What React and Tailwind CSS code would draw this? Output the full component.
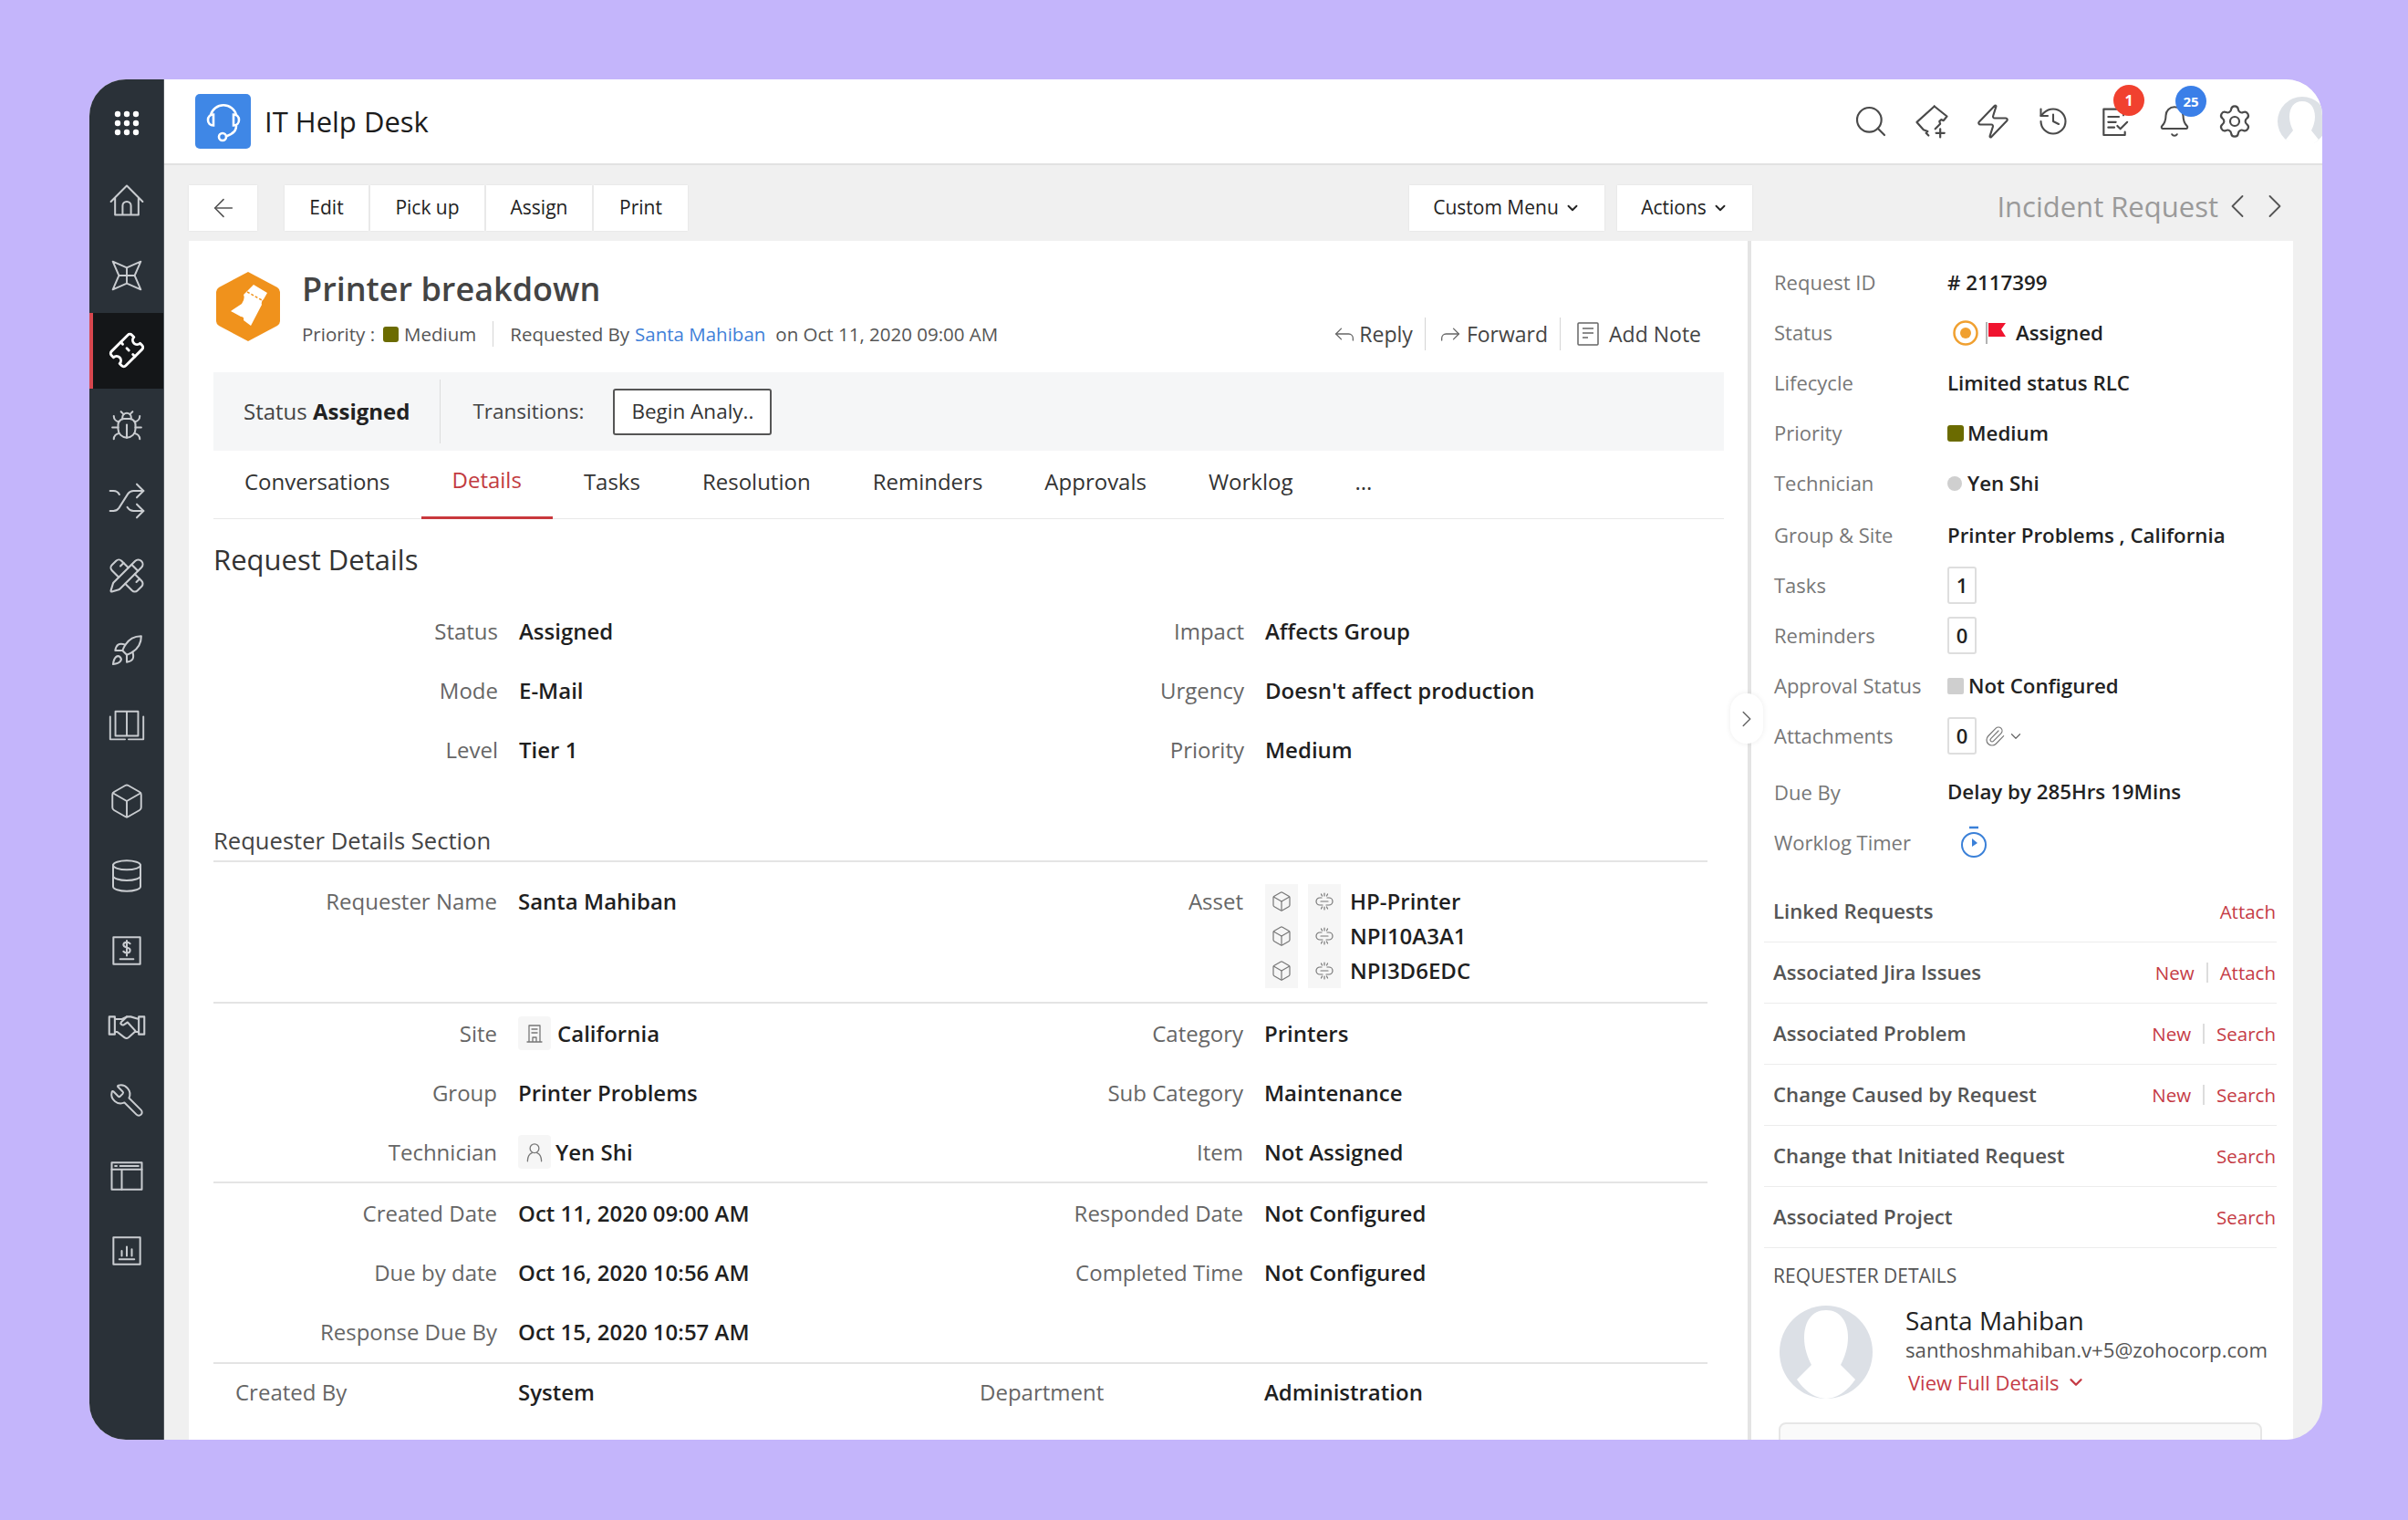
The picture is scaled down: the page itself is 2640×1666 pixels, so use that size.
import React from 'react';
import {
  Search, Zap, History, Bell, Settings, Bug, Shuffle, PencilRuler, Rocket, Box, Database, Wrench,
  ArrowLeft, ChevronDown, ChevronLeft, ChevronRight, Reply, Forward, Paperclip, Ticket,
} from 'lucide-react';

const Svg = ({ size = 36, className = '', children, sw = 1.4 }) => (
  <svg width={size} height={size} viewBox="0 0 24 24" fill="none" stroke="currentColor" strokeWidth={sw} strokeLinecap="round" strokeLinejoin="round" className={className}>
    {children}
  </svg>
);

const HomeIcon = () => (
  <Svg size={44} sw={1.1}><path d="M2.500 12.500 12 3l9.500 9.500M5 10.500V20.500H19V10.500M9.500 20.500V15a2.500 2.500 0 0 1 5 0v5.500" /></Svg>
);
const StarIcon = () => (
  <Svg size={46} sw={1}><path d="M4 4l8 3.500L20 4l-3.500 8L20 20l-8-3.500L4 20l3.500-8zM12 7.500v9M7.500 12h9" /></Svg>
);
const BookIcon = () => (
  <Svg size={46} sw={1}>
    <path d="M5.500 4H12v14H5.500zM12 4h6.500v14H12zM2.500 7v13H11M21.500 7v13H13" />
  </Svg>
);
const DollarIcon = () => (
  <Svg size={44} sw={1.1}>
    <rect x="4" y="4" width="16" height="16" />
    <path d="M14 7.800c-.5-.6-1.200-.9-2-.9-1.100 0-2 .6-2 1.600 0 2.200 4 1 4 3.200 0 1-.9 1.600-2 1.600-.8 0-1.500-.3-2-.9M12 6v9M8 17h8" />
  </Svg>
);
const HandshakeIcon = () => (
  <Svg size={42} sw={1.2}>
    <path d="M1 6.500h3.500v11H1zM23 6.500h-3.500v11H23zM4.500 8H9l3-1.500h2.500L19.500 8M4.500 16H6l4.500 3.500c1 .8 2.300.5 3-.3l3.500-3.200h2.500" />
    <path d="M12 6.500l-3.500 3.300c-.8 1 .5 2.400 1.700 1.700l2.300-1.500 5 5.500" />
  </Svg>
);
const LayoutIcon = () => (
  <Svg size={44} sw={1.1}>
    <rect x="3" y="4" width="18" height="16" />
    <path d="M3 8h18M9 8v12M5 6h1M8 6h11" />
  </Svg>
);
const ChartIcon = () => (
  <Svg size={44} sw={1.1}>
    <rect x="4" y="4" width="16" height="16" />
    <path d="M7.500 17h9M9 15v-3M12 15V9.500M15 15v-4" />
  </Svg>
);

const sideIcons = [
  { icon: <HomeIcon /> },
  { icon: <StarIcon /> },
  { icon: <Ticket size={38} strokeWidth={1.8} className="-rotate-45 text-white" />, active: true },
  { icon: <Bug size={38} strokeWidth={1.3} /> },
  { icon: <Shuffle size={44} strokeWidth={1.1} /> },
  { icon: <PencilRuler size={42} strokeWidth={1.2} /> },
  { icon: <Rocket size={38} strokeWidth={1.3} /> },
  { icon: <BookIcon /> },
  { icon: <Box size={42} strokeWidth={1.1} /> },
  { icon: <Database size={40} strokeWidth={1.2} /> },
  { icon: <DollarIcon /> },
  { icon: <HandshakeIcon /> },
  { icon: <Wrench size={40} strokeWidth={1.2} className="-scale-x-100" /> },
  { icon: <LayoutIcon /> },
  { icon: <ChartIcon /> },
];

function Sidebar() {
  return (
    <div className="w-[82px] shrink-0 bg-[#2a3138] border-r border-[#50565c] text-[#c9ccd0]">
      <div className="h-[92px] pt-1 flex items-center justify-center">
        <svg width="28" height="28" viewBox="0 0 28 28" fill="white">
          {[4, 14, 24].map((y) => [4, 14, 24].map((x) => <circle key={`${x}-${y}`} cx={x} cy={y} r="3.200" />))}
        </svg>
      </div>
      {sideIcons.map((item, i) => (
        <div
          key={i}
          className={item.active
            ? 'h-[82.2px] flex items-center justify-center bg-[#141618] border-l-[4px] border-[#d8474f] pr-1'
            : 'h-[82.2px] flex items-center justify-center'}
        >
          {item.icon}
        </div>
      ))}
    </div>
  );
}

function TopBar() {
  return (
    <div className="h-[94px] shrink-0 bg-white border-b-2 border-[#e2e2e2] flex items-center pl-[34px] text-[#4a4a4a]">
      <div className="w-[61px] h-[60px] rounded-[5px] bg-[#3f87e6] flex items-center justify-center">
        <svg width="48" height="48" viewBox="0 0 48 48" fill="none" stroke="white" strokeWidth="2.600" strokeLinecap="round">
          <path d="M10 17a14.500 14.500 0 0 1 28 0" />
          <path d="M13 16.500v12c-3.500 0-6-2.500-6-6s2.500-6 6-6zM35 16.500v12c3.500 0 6-2.500 6-6s-2.500-6-6-6z" />
          <path d="M38 29c0 5-4 9-10 11" />
          <circle cx="23" cy="41" r="4" />
        </svg>
      </div>
      <div className="ml-[15px] text-[31px] text-[#1c1c1c]">IT Help Desk</div>
      <div className="ml-auto flex items-center h-full">
        <div className="w-[66px] flex justify-center"><Search size={40} strokeWidth={1.3} /></div>
        <div className="w-[68px] flex justify-center">
          <Svg size={44} sw={1.2}>
            <path d="M13.500 3l7.500 6-2 2.500-1.500-.5-1 1 .5 1.500-3 3M10 20.500l-1.500-1.500 1-1-2.500-1L3 12.500 13.500 3" />
            <path d="M17 16.500v5M14.500 19h5" />
          </Svg>
        </div>
        <div className="w-[66px] flex justify-center"><Zap size={42} strokeWidth={1.2} /></div>
        <div className="w-[66px] flex justify-center"><History size={36} strokeWidth={1.4} /></div>
        <div className="relative w-[68px] flex justify-center">
          <Svg size={40} sw={1.3}>
            <path d="M18 8V4H5v17h14v-2M8 9h7M8 12.500h5M8 16h4M14 15l2 2 4.500-4.500" />
          </Svg>
          <span className="absolute left-[33px] -top-[20px] w-[34px] h-[34px] rounded-full bg-[#f1412f] text-white text-[16px] font-bold flex items-center justify-center">1</span>
        </div>
        <div className="relative w-[64px] flex justify-center">
          <Bell size={38} strokeWidth={1.3} />
          <span className="absolute left-[33px] -top-[20px] w-[34px] h-[34px] rounded-full bg-[#3a7fe8] text-white text-[15px] font-bold flex items-center justify-center">25</span>
        </div>
        <div className="w-[68px] flex justify-center"><Settings size={40} strokeWidth={1.3} /></div>
        <div className="w-[62px] self-stretch flex items-center overflow-hidden pl-[12px]">
          <svg width="56" height="56" viewBox="0 0 56 56" className="shrink-0">
            <circle cx="28" cy="28" r="27" fill="#dde1e6" />
            <path d="M28 6c9 0 14 7 14 17 0 6-2 11-4 15l8 10c-5 5-11 8-18 8s-14-3-18-8l8-10c-2-4-4-9-4-15 0-10 5-17 14-17z" fill="white" />
          </svg>
        </div>
      </div>
    </div>
  );
}

const ToolBtn = ({ className = '', children }) => (
  <div className={`h-[50px] bg-white flex items-center justify-center text-[21px] text-[#222] shadow-[0_0_2px_rgba(0,0,0,0.08)] ${className}`}>{children}</div>
);

function Toolbar() {
  return (
    <div className="h-[83px] shrink-0 flex items-start pt-[22px] pl-[27px] pr-[32px]">
      <ToolBtn className="w-[75px] text-[#555]"><ArrowLeft size={32} strokeWidth={1.2} /></ToolBtn>
      <div className="ml-[30px] flex gap-[2px]">
        <ToolBtn className="w-[92px]">Edit</ToolBtn>
        <ToolBtn className="w-[125px]">Pick up</ToolBtn>
        <ToolBtn className="w-[116px]">Assign</ToolBtn>
        <ToolBtn className="w-[103px]">Print</ToolBtn>
      </div>
      <div className="ml-[791px] flex gap-[14px]">
        <ToolBtn className="w-[214px] gap-[6px]">Custom Menu <ChevronDown size={18} strokeWidth={2.5} /></ToolBtn>
        <ToolBtn className="w-[148px] gap-[6px]">Actions <ChevronDown size={18} strokeWidth={2.5} /></ToolBtn>
      </div>
      <div className="ml-auto h-[46px] flex items-center text-[#9a9a9a]">
        <span className="text-[31px]">Incident Request</span>
        <ChevronLeft size={44} strokeWidth={1} className="-ml-[1px] text-[#555]" />
        <ChevronRight size={44} strokeWidth={1} className="-ml-[3px] -mr-[2px] text-[#555]" />
      </div>
    </div>
  );
}

const FieldRow = ({ label, value, label2, value2 }) => (
  <div className="h-[65px] flex items-center text-[24px]">
    <div className="w-[311px] text-right text-[#666] shrink-0">{label}</div>
    <div className="ml-[23px] w-[532px] shrink-0 font-semibold text-[#1f1f1f] flex items-center">{value}</div>
    {label2 && <div className="w-[263px] text-right text-[#666] shrink-0">{label2}</div>}
    {value2 && <div className="ml-[23px] font-semibold text-[#1f1f1f]">{value2}</div>}
  </div>
);

const IconChip = ({ children, className = '' }) => (
  <div className={`w-[36px] h-[37px] rounded-[4px] bg-[#f6f6f6] flex items-center justify-center text-[#777] ${className}`}>{children}</div>
);

const UnlinkIcon = () => (
  <Svg size={24} sw={1.2}>
    <path d="M9 8H7a4 4 0 0 0 0 8h3M15 8h2a4 4 0 0 1 0 8h-3M8 12h8M12 3v3M12 18v3M8.500 4l1 2M15.500 4l-1 2M8.500 20l1-2M15.500 20l-1-2" />
  </Svg>
);

function AssetLine({ name }) {
  return (
    <div className="h-[38px] flex items-center">
      <IconChip className="h-[38px] rounded-none"><Box size={24} strokeWidth={1.2} /></IconChip>
      <IconChip className="ml-[11px] h-[38px] rounded-none"><UnlinkIcon /></IconChip>
      <div className="ml-[10px] font-semibold text-[#1f1f1f]">{name}</div>
    </div>
  );
}

const tabs = ['Conversations', 'Details', 'Tasks', 'Resolution', 'Reminders', 'Approvals', 'Worklog', '...'];

function LeftPanel() {
  return (
    <div className="w-[1709px] shrink-0 pl-[27px] pr-[26px]">
      <div className="h-[144px] pt-[33px] pl-[3px] flex">
        <svg width="70" height="78" viewBox="0 0 70 78" className="shrink-0">
          <path d="M35 1 L67 18 Q70 20 70 23 V55 Q70 58 67 60 L35 77 L3 60 Q0 58 0 55 V23 Q0 20 3 18 Z" fill="#f0921c" />
          <path d="M41 15 L56 24 L52 31 Q49 33 50 37 L38 60 L30 54 Q31 50 27 50 L16 44 L28 36 Q32 30 30 26 Z" fill="white" />
          <path d="M34 23 L52 33" stroke="#f0921c" strokeWidth="1.500" strokeDasharray="3 2" />
        </svg>
        <div className="ml-[24px] flex-1">
          <div className="h-[40px] flex items-center text-[36px] font-semibold text-[#444]">Printer breakdown</div>
          <div className="h-[58px] flex items-center text-[20.5px] text-[#555] pr-[25px]">
            <span>Priority :</span>
            <span className="ml-[9px] w-[17px] h-[17px] rounded-[3px] bg-[#6b6b00]" />
            <span className="ml-[6px]">Medium</span>
            <span className="mx-[18px] w-px h-[28px] bg-[#d5d5d5]" />
            <span>Requested By</span>
            <span className="ml-[6px] text-[#3f7fd8]">Santa Mahiban</span>
            <span className="ml-[11px]">on Oct 11, 2020 09:00 AM</span>
            <div className="ml-auto flex items-center text-[23px] text-[#444]">
              <Reply size={28} strokeWidth={1.1} className="text-[#666]" />
              <span className="ml-[2px]">Reply</span>
              <span className="mx-[13px] w-px h-[36px] bg-[#d5d5d5]" />
              <Forward size={28} strokeWidth={1.1} className="text-[#666]" />
              <span className="ml-[4px]">Forward</span>
              <span className="mx-[13px] w-px h-[36px] bg-[#d5d5d5]" />
              <svg width="26" height="28" viewBox="0 0 26 28" fill="none" stroke="#666" strokeWidth="1.500" className="ml-[4px]">
                <rect x="2" y="2" width="22" height="24" rx="1" />
                <path d="M7 8h12M7 13h12M7 18h6" />
              </svg>
              <span className="ml-[10px]">Add Note</span>
            </div>
          </div>
        </div>
      </div>

      <div className="h-[86px] bg-[#f5f6f7] flex items-center pl-[33px] text-[24px] text-[#444]">
        <span>Status <b className="font-bold text-[#222]">Assigned</b></span>
        <span className="ml-[33px] w-px h-[70px] bg-[#dcdcdc]" />
        <span className="ml-[35px] text-[22.5px]">Transitions:</span>
        <span className="ml-[32px] w-[174px] h-[51px] border-2 border-[#555] rounded-[3px] bg-white flex items-center justify-center text-[22.5px] text-[#333]">Begin Analy..</span>
      </div>

      <div className="h-[75px] flex border-b border-[#e8e8e8]">
        {tabs.map((t) => (
          <div
            key={t}
            className={t === 'Details'
              ? 'px-[34px] h-[75px] pb-[8px] flex items-center text-[24px] text-[#c23b40] border-b-[3px] border-[#c9383d]'
              : 'px-[34px] h-[75px] pb-[8px] flex items-center text-[24px] text-[#333]'}
          >
            {t}
          </div>
        ))}
      </div>

      <div className="h-[90px] pb-[2px] flex items-center text-[31px] text-[#333]">Request Details</div>
      <div className="pl-px mr-[18px]">
        <FieldRow label="Status" value="Assigned" label2="Impact" value2="Affects Group" />
        <FieldRow label="Mode" value="E-Mail" label2="Urgency" value2="Doesn't affect production" />
        <FieldRow label="Level" value="Tier 1" label2="Priority" value2="Medium" />
      </div>

      <div className="mr-[18px]">
        <div className="h-[91px] flex items-end pb-[2px] border-b-2 border-[#e4e4e4] text-[25.6px] text-[#444]">Requester Details Section</div>
        <div className="h-[155px] flex text-[24px] border-b-2 border-[#e4e4e4]">
          <div className="w-[866px] shrink-0 pt-[25px] flex items-start">
            <div className="w-[311px] text-right text-[#666] shrink-0">Requester Name</div>
            <div className="ml-[23px] font-semibold text-[#1f1f1f]">Santa Mahiban</div>
          </div>
          <div className="flex pt-[25px]">
            <div className="w-[263px] text-right text-[#666] shrink-0">Asset</div>
            <div className="ml-[24px] -mt-[1px]">
              <AssetLine name="HP-Printer" />
              <AssetLine name="NPI10A3A1" />
              <AssetLine name="NPI3D6EDC" />
            </div>
          </div>
        </div>
        <div className="border-b-2 border-[#e4e4e4]">
          <FieldRow
            label="Site"
            value={<><IconChip><Svg size={24} sw={1.3}><path d="M6 21V3h12v18M4 21h16M9 7h6M9 11h6M10 21v-5h4v5" /></Svg></IconChip><span className="ml-[7px]">California</span></>}
            label2="Category"
            value2="Printers"
          />
          <FieldRow label="Group" value="Printer Problems" label2="Sub Category" value2="Maintenance" />
          <FieldRow
            label="Technician"
            value={<><IconChip><Svg size={26} sw={1.2}><circle cx="12" cy="8" r="4.500" /><path d="M5 21c0-5 2-7.500 4.500-8.500M19 21c0-5-2-7.500-4.500-8.500" /></Svg></IconChip><span className="ml-[5px]">Yen Shi</span></>}
            label2="Item"
            value2="Not Assigned"
          />
        </div>
        <div className="border-b-2 border-[#e4e4e4] pb-[1px]">
          <FieldRow label="Created Date" value="Oct 11, 2020 09:00 AM" label2="Responded Date" value2="Not Configured" />
          <FieldRow label="Due by date" value="Oct 16, 2020 10:56 AM" label2="Completed Time" value2="Not Configured" />
          <FieldRow label="Response Due By" value="Oct 15, 2020 10:57 AM" />
        </div>
        <div className="h-[62px] flex items-center text-[24px]">
          <div className="w-[334px] pl-[24px] text-[#666] shrink-0">Created By</div>
          <div className="w-[506px] shrink-0 font-semibold text-[#1f1f1f]">System</div>
          <div className="w-[312px] shrink-0 text-[#666]">Department</div>
          <div className="font-semibold text-[#1f1f1f]">Administration</div>
        </div>
      </div>
    </div>
  );
}

const InfoRow = ({ label, children, h = 'h-[55px]' }) => (
  <div className={`${h} flex items-center`}>
    <div className="w-[190px] shrink-0 text-[22px] text-[#777]">{label}</div>
    <div className="flex items-center text-[22.3px] font-semibold text-[#222]">{children}</div>
  </div>
);

const CountBox = ({ n }) => (
  <span className="w-[32px] h-[41px] border-2 border-[#dedede] rounded-[3px] bg-white flex items-center justify-center text-[22px] text-[#222]">{n}</span>
);

const links = [
  { name: 'Linked Requests', actions: ['Attach'] },
  { name: 'Associated Jira Issues', actions: ['New', 'Attach'] },
  { name: 'Associated Problem', actions: ['New', 'Search'] },
  { name: 'Change Caused by Request', actions: ['New', 'Search'] },
  { name: 'Change that Initiated Request', actions: ['Search'] },
  { name: 'Associated Project', actions: ['Search'] },
];

function RightPanel() {
  return (
    <div className="relative flex-1 border-l-[4px] border-[#e4e4e4] min-w-0">
      <div className="absolute -left-[23px] top-[496px] w-[36px] h-[55px] rounded-[18px] bg-white shadow-[0_0_6px_rgba(0,0,0,0.08)] flex items-center justify-center text-[#666]">
        <ChevronRight size={30} strokeWidth={1.2} />
      </div>
      <div className="pt-[18px] pl-[25px]">
        <InfoRow label="Request ID"># 2117399</InfoRow>
        <InfoRow label="Status">
          <svg width="60" height="30" viewBox="0 0 60 30" fill="none" className="ml-[5px]">
            <circle cx="15" cy="15" r="12.500" stroke="#f0a030" strokeWidth="2.500" />
            <circle cx="15" cy="15" r="6" fill="#f0a030" />
            <path d="M38 3V27" stroke="#999" strokeWidth="1.500" />
            <path d="M40 4H59L54 11L59 19H40Z" fill="#f0142f" />
          </svg>
          <span className="ml-[10px]">Assigned</span>
        </InfoRow>
        <InfoRow label="Lifecycle">Limited status RLC</InfoRow>
        <InfoRow label="Priority">
          <span className="w-[18px] h-[18px] rounded-[3px] bg-[#6b6b00]" />
          <span className="ml-[4px]">Medium</span>
        </InfoRow>
        <InfoRow label="Technician">
          <span className="w-[16px] h-[16px] rounded-full bg-[#cfcfcf]" />
          <span className="ml-[6px]">Yen Shi</span>
        </InfoRow>
        <div className="mt-[2px]">
          <InfoRow label="Group &amp; Site">Printer Problems , California</InfoRow>
          <InfoRow label="Tasks"><CountBox n="1" /></InfoRow>
          <InfoRow label="Reminders"><CountBox n="0" /></InfoRow>
          <InfoRow label="Approval Status">
            <span className="w-[18px] h-[18px] rounded-[2px] bg-[#cfcfcf]" />
            <span className="ml-[5px]">Not Configured</span>
          </InfoRow>
          <InfoRow label="Attachments">
            <CountBox n="0" />
            <Paperclip size={24} strokeWidth={1.2} className="ml-[8px] text-[#777]" />
            <ChevronDown size={18} strokeWidth={1.6} className="ml-[2px] text-[#666]" />
          </InfoRow>
          <InfoRow label="Due By" h="h-[68px]">Delay by 285Hrs 19Mins</InfoRow>
          <InfoRow label="Worklog Timer" h="h-[42px]">
            <svg width="34" height="38" viewBox="0 0 34 38" fill="none" stroke="#3a80d8" strokeWidth="2" className="ml-[12px]">
              <path d="M12 3h10" strokeWidth="2.500" />
              <circle cx="17" cy="22" r="13" />
              <path d="M15 15v9l6-4z" fill="#3a80d8" stroke="none" />
            </svg>
          </InfoRow>
        </div>
      </div>

      <div className="mt-[22px] ml-[14px] mr-[18px]">
        {links.map((row) => (
          <div key={row.name} className="h-[67px] pl-[10px] pr-[1px] border-b border-[#ececec] flex items-center justify-between">
            <span className="text-[22.2px] font-semibold text-[#555]">{row.name}</span>
            <span className="flex items-center text-[20.5px] text-[#c53b45]">
              {row.actions.map((a, i) => (
                <React.Fragment key={a}>
                  {i > 0 && <span className="mx-[13px] w-[2px] h-[22px] bg-[#dddddd]" />}
                  <span>{a}</span>
                </React.Fragment>
              ))}
            </span>
          </div>
        ))}
        <div className="h-[62px] pl-[10px] flex items-center text-[21px] font-medium text-[#555]">REQUESTER DETAILS</div>
        <div className="flex pl-[16px] h-[124px]">
          <svg width="104" height="104" viewBox="0 0 104 104" className="shrink-0">
            <circle cx="52" cy="52" r="51" fill="#dce0e6" />
            <path d="M52 6c16 0 24 13 24 30 0 12-4 22-8 30l16 16c-8 12-20 21-32 21S28 94 20 82l16-16c-4-8-8-18-8-30C28 19 36 6 52 6z" fill="white" />
          </svg>
          <div className="ml-[35px] -mt-[1px] min-w-0">
            <div className="h-[36px] flex items-center text-[28px] font-medium text-[#222]">Santa Mahiban</div>
            <div className="h-[30px] flex items-center text-[22.2px] text-[#555] whitespace-nowrap">santhoshmahiban.v+5@zohocorp.com</div>
            <div className="h-[40px] ml-[3px] flex items-center text-[22px] text-[#c53b45]">
              View Full Details <ChevronDown size={22} strokeWidth={2.6} className="ml-[8px]" />
            </div>
          </div>
        </div>
        <div className="mt-[5px] ml-[16px] mr-[16px] h-[40px] rounded-t-[8px] border-2 border-[#e6e6e6] bg-[#fafafa]" />
      </div>
    </div>
  );
}

export default function App() {
  return (
    <div className="w-[2640px] h-[1666px] bg-[#c4b5fb] pt-[87px] pl-[98px] font-['Open_Sans',sans-serif]">
      <div className="w-[2448px] h-[1491px] rounded-[40px] overflow-hidden flex bg-[#f0f0f0]">
        <Sidebar />
        <div className="flex-1 flex flex-col min-w-0">
          <TopBar />
          <Toolbar />
          <div className="flex-1 ml-[27px] mr-[32px] bg-white flex overflow-hidden">
            <LeftPanel />
            <RightPanel />
          </div>
        </div>
      </div>
    </div>
  );
}
